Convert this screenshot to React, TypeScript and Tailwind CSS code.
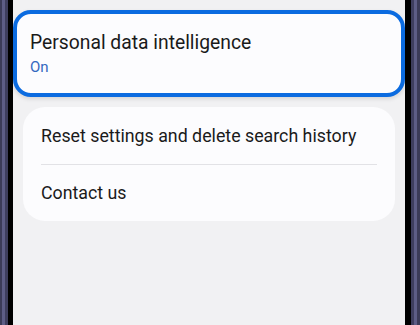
import React from "react";

export default function App() {
  return (
    <div className="flex h-[325px] w-[420px] overflow-hidden" style={{ fontFamily: "Roboto, 'Noto Sans', sans-serif" }}>
      <div className="flex h-full w-[8px]">
        <div className="w-[2px] bg-[#3b3b58]" />
        <div className="w-[3px] bg-[#5d5d86]" />
        <div className="w-[3px] bg-[#3e3e5e]" />
      </div>
      <div className="h-full w-[5px] bg-black" />
      <div className="flex h-full flex-1 flex-col bg-[#f1f1f3] pt-[10px]">
        <div className="flex h-[87px] flex-col justify-center rounded-[18px] border-[4px] border-[#0b6be0] bg-[#fcfcfe] pl-[13px] shadow-[0_2px_4px_rgba(0,0,0,0.12)]">
          <div className="text-[19.3px] leading-[24px] text-[#1a1a1a]">Personal data intelligence</div>
          <div className="mt-[2px] text-[15px] leading-[20px] text-[#3468c0]">On</div>
        </div>
        <div className="mx-[10px] mt-[10px] rounded-[22px] bg-[#fcfcfe] px-[18px]">
          <div className="flex h-[57px] items-center pt-[1px] text-[17.8px] text-[#1a1a1a]">Reset settings and delete search history</div>
          <div className="h-px bg-[#e2e2e6]" />
          <div className="flex h-[56px] items-center text-[17.8px] text-[#1a1a1a]">Contact us</div>
        </div>
      </div>
      <div className="h-full w-[6px] bg-black" />
      <div className="flex h-full w-[9px]">
        <div className="w-[3px] bg-[#3e3e5e]" />
        <div className="w-[3px] bg-[#5d5d86]" />
        <div className="w-[3px] bg-[#3b3b58]" />
      </div>
    </div>
  );
}
